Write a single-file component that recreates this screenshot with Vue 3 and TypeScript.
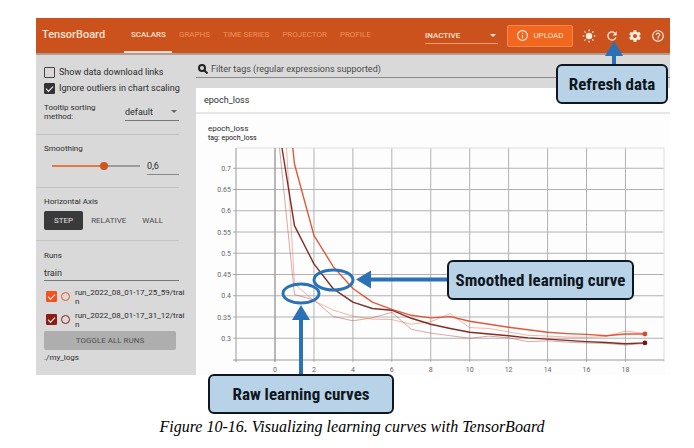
<script setup lang="ts">
import { computed, ref } from 'vue'

interface Run {
  name: string
  color: string
  checked: boolean
}

interface Series {
  color: string
  width: number
  opacity: number
  entry: number
  values: number[]
}

const tabs = ['SCALARS', 'GRAPHS', 'TIME SERIES', 'PROJECTOR', 'PROFILE']
const axes = ['STEP', 'RELATIVE', 'WALL']
const activeTab = ref('SCALARS')
const activeAxis = ref('STEP')
const showLinks = ref(false)
const ignoreOutliers = ref(true)
const smoothing = ref(0.6)
const smoothingText = computed(() => smoothing.value.toString().replace('.', ','))
const runFilter = ref('train')
const tagFilter = ref('')

const runs = ref<Run[]>([
  { name: 'run_2022_08_01-17_25_59/train', color: '#f4511e', checked: true },
  { name: 'run_2022_08_01-17_31_12/train', color: '#8e1c10', checked: true },
])

function toggleAll(): void {
  const next = !runs.value.every((r) => r.checked)
  runs.value.forEach((r) => (r.checked = next))
}

/* Chart geometry, in viewBox units */
const plot = { left: 40, right: 468, top: 6, bottom: 218, zero: 79, step: 19.47 }
const xTicks = Array.from({ length: 10 }, (_, i) => i * 2)
const yTicks = [0.7, 0.65, 0.6, 0.55, 0.5, 0.45, 0.4, 0.35, 0.3]
const px = (epoch: number): number => plot.zero + epoch * plot.step
const py = (loss: number): number => plot.bottom - 0.5 + ((0.25 - loss) / 0.05) * 21.25

/* Each series enters the plot at its top edge (entry), then has one value per epoch from 1 on */
const series: Series[] = [
  {
    color: '#b0544a', width: 0.9, opacity: 0.55, entry: 83.5,
    values: [0.403, 0.39, 0.351, 0.341, 0.348, 0.361, 0.321, 0.312, 0.306, 0.3, 0.305, 0.301, 0.292, 0.294, 0.291, 0.289, 0.288, 0.284, 0.288],
  },
  {
    color: '#f0664a', width: 0.9, opacity: 0.55, entry: 90.5,
    values: [0.428, 0.388, 0.366, 0.352, 0.345, 0.344, 0.333, 0.339, 0.358, 0.325, 0.323, 0.315, 0.307, 0.305, 0.303, 0.302, 0.304, 0.317, 0.311],
  },
  {
    color: '#74160f', width: 1.4, opacity: 0.9, entry: 86,
    values: [0.565, 0.475, 0.416, 0.385, 0.37, 0.366, 0.347, 0.333, 0.323, 0.314, 0.31, 0.306, 0.301, 0.298, 0.295, 0.292, 0.29, 0.287, 0.289],
  },
  {
    color: '#dc4726', width: 1.4, opacity: 0.9, entry: 96.8,
    values: [0.71, 0.542, 0.468, 0.417, 0.385, 0.368, 0.354, 0.348, 0.351, 0.34, 0.333, 0.326, 0.32, 0.314, 0.311, 0.309, 0.306, 0.31, 0.31],
  },
]

function linePoints(s: Series): string {
  return [`${s.entry},${plot.top}`, ...s.values.map((v, i) => `${px(i + 1)},${py(v)}`)].join(' ')
}
const endpoints = series.slice(2).map((s) => ({
  color: s.color,
  x: px(s.values.length),
  y: py(s.values[s.values.length - 1]),
}))
</script>

<template>
  <figure class="figure">
    <div class="shot">
      <header class="bar">
        <h1 class="brand">TensorBoard</h1>
        <nav class="tabs">
          <a
            v-for="t in tabs"
            :key="t"
            href="#"
            class="tab"
            :class="{ active: t === activeTab }"
            @click.prevent="activeTab = t"
          >{{ t }}</a>
        </nav>
        <div class="tools">
          <div class="inactive">
            <select aria-label="Inactive plugins">
              <option>INACTIVE</option>
            </select>
            <svg class="caret" viewBox="0 0 6 3"><path d="M0 0h6L3 3z" /></svg>
          </div>
          <button class="upload" type="button">
            <svg viewBox="0 0 24 24"><path d="M11 7h2v2h-2zm0 4h2v6h-2zm1-9C6.48 2 2 6.480 2 12s4.480 10 10 10 10-4.480 10-10S17.520 2 12 2zm0 18c-4.410 0-8-3.590-8-8s3.590-8 8-8 8 3.590 8 8-3.590 8-8 8z" /></svg>
            UPLOAD
          </button>
          <button class="icon" type="button" aria-label="Theme">
            <svg viewBox="0 0 24 24">
              <circle cx="12" cy="12" r="5.500" />
              <path d="M12 1v3M12 20v3M1 12h3M20 12h3M4.200 4.200l2.100 2.100M17.700 17.700l2.100 2.100M4.200 19.800l2.100-2.100M17.700 6.300l2.100-2.100" fill="none" stroke="currentColor" stroke-width="2" />
            </svg>
          </button>
          <button class="icon" type="button" aria-label="Refresh">
            <svg viewBox="0 0 24 24"><path d="M17.650 6.350A7.958 7.958 0 0 0 12 4c-4.420 0-7.990 3.580-7.990 8s3.570 8 7.990 8c3.730 0 6.840-2.550 7.730-6h-2.080A5.990 5.990 0 0 1 12 18c-3.310 0-6-2.690-6-6s2.690-6 6-6c1.660 0 3.140.69 4.220 1.780L13 11h7V4z" /></svg>
          </button>
          <button class="icon" type="button" aria-label="Settings">
            <svg viewBox="0 0 24 24"><path d="M19.430 12.980c.04-.32.07-.64.07-.98s-.03-.66-.07-.98l2.110-1.650c.19-.15.24-.42.12-.64l-2-3.460c-.12-.22-.39-.3-.61-.22l-2.490 1c-.52-.4-1.080-.73-1.690-.98l-.38-2.650C14.460 2.180 14.250 2 14 2h-4c-.25 0-.46.18-.49.42l-.38 2.650c-.61.25-1.170.59-1.690.98l-2.490-1c-.23-.09-.49 0-.61.22l-2 3.460c-.13.22-.07.49.12.64l2.110 1.650c-.04.32-.07.65-.07.98s.03.66.07.98l-2.110 1.650c-.19.15-.24.42-.12.64l2 3.460c.12.22.39.3.61.22l2.490-1c.52.4 1.080.73 1.690.98l.38 2.650c.03.24.24.42.49.42h4c.25 0 .46-.18.49-.42l.38-2.650c.61-.25 1.170-.59 1.690-.98l2.490 1c.23.09.49 0 .61-.22l2-3.460c.12-.22.07-.49-.12-.64zM12 15.500c-1.930 0-3.500-1.570-3.500-3.500s1.570-3.500 3.500-3.500 3.500 1.570 3.500 3.500-1.570 3.500-3.500 3.500z" /></svg>
          </button>
          <button class="icon" type="button" aria-label="Help">
            <svg viewBox="0 0 24 24"><path d="M11 18h2v-2h-2zm1-16C6.480 2 2 6.480 2 12s4.480 10 10 10 10-4.480 10-10S17.520 2 12 2zm0 18c-4.410 0-8-3.590-8-8s3.590-8 8-8 8 3.590 8 8-3.590 8-8 8zm0-14c-2.210 0-4 1.790-4 4h2c0-1.100.9-2 2-2s2 .9 2 2c0 2-3 1.750-3 5h2c0-2.250 3-2.500 3-5 0-2.210-1.790-4-4-4z" /></svg>
          </button>
        </div>
      </header>

      <div class="body">
        <aside class="side">
          <section class="block options">
            <label class="check"><input v-model="showLinks" type="checkbox" /><span>Show data download links</span></label>
            <label class="check"><input v-model="ignoreOutliers" type="checkbox" /><span>Ignore outliers in chart scaling</span></label>
            <div class="sorting">
              <label for="sorting">Tooltip sorting method:</label>
              <div class="picker">
                <select id="sorting">
                  <option>default</option>
                </select>
                <svg class="caret" viewBox="0 0 6 3"><path d="M0 0h6L3 3z" /></svg>
              </div>
            </div>
          </section>
          <section class="block smooth">
            <label class="title" for="smoothing">Smoothing</label>
            <div class="slide">
              <input id="smoothing" v-model.number="smoothing" type="range" min="0" max="1" step="0.1" />
              <input class="value" type="text" :value="smoothingText" aria-label="Smoothing value" />
            </div>
          </section>
          <section class="block axis">
            <h2 class="title">Horizontal Axis</h2>
            <div class="axes">
              <button
                v-for="a in axes"
                :key="a"
                type="button"
                :class="{ on: a === activeAxis }"
                @click="activeAxis = a"
              >{{ a }}</button>
            </div>
          </section>
          <section class="block runs">
            <label class="title" for="run-filter">Runs</label>
            <input id="run-filter" v-model="runFilter" class="run-filter" type="text" />
            <label v-for="r in runs" :key="r.name" class="run" :style="{ '--run': r.color }">
              <input v-model="r.checked" type="checkbox" />
              <i class="ring"></i>
              <span>{{ r.name }}</span>
            </label>
            <button class="toggle" type="button" @click="toggleAll">TOGGLE ALL RUNS</button>
            <p class="logdir">./my_logs</p>
          </section>
        </aside>

        <main class="main">
          <label class="search">
            <svg viewBox="0 0 10 10"><circle cx="4" cy="4" r="3" /><path d="M6.200 6.200L9.500 9.500" /></svg>
            <input v-model="tagFilter" type="text" aria-label="Filter tags" placeholder="Filter tags (regular expressions supported)" />
          </label>
          <h2 class="group">epoch_loss</h2>
          <section class="card">
            <h3>epoch_loss</h3>
            <p>tag: epoch_loss</p>
            <svg class="chart" viewBox="0 0 474 233" role="img" aria-label="epoch_loss">
              <g class="grid">
                <path v-for="y in yTicks" :key="y" :d="`M${plot.left - 3} ${py(y)}H${plot.right}`" />
                <path v-for="x in xTicks" :key="x" :d="`M${px(x)} ${plot.top}V${plot.bottom + 2}`" />
                <path class="faint" :d="`M${plot.left} ${plot.top}H${plot.right}V${plot.bottom + 2}`" />
                <path class="edge" :d="`M${plot.left} ${plot.top}V${plot.bottom + 2}M${plot.left - 3} ${plot.bottom}H${plot.right}`" />
                <path class="edge" :d="`M${plot.zero} ${plot.top}V${plot.bottom + 2}`" />
              </g>
              <g class="ticks">
                <text v-for="y in yTicks" :key="y" x="35" :y="py(y) + 2.500" text-anchor="end">{{ y }}</text>
                <text v-for="x in xTicks" :key="x" :x="px(x)" y="230" text-anchor="middle">{{ x }}</text>
              </g>
              <polyline
                v-for="(s, i) in series"
                :key="i"
                :points="linePoints(s)"
                fill="none"
                stroke-linejoin="round"
                :stroke="s.color"
                :stroke-width="s.width"
                :opacity="s.opacity"
              />
              <circle v-for="e in endpoints" :key="e.color" :cx="e.x" :cy="e.y" r="2.400" :fill="e.color" />
            </svg>
          </section>
        </main>
      </div>

      <svg class="marks" viewBox="0 0 634 397">
        <g fill="none" stroke="#2a71b8" stroke-width="3">
          <ellipse cx="265" cy="275.500" rx="18" ry="9.500" />
          <ellipse cx="297.500" cy="262" rx="19.500" ry="10" />
          <path d="M265 300v58M334 261.500h79M578 36v12" stroke-width="4" />
        </g>
        <path fill="#2a71b8" d="M265 287l9 15h-18zM320 261.500l15-9v18zM578 23l9 15h-18z" />
      </svg>
      <div class="callout refresh">Refresh data</div>
      <div class="callout smoothed">Smoothed learning curve</div>
      <div class="callout raw">Raw learning curves</div>
    </div>
    <figcaption>Figure 10-16. Visualizing learning curves with TensorBoard</figcaption>
  </figure>
</template>

<style>
body {
  background: #fff;
}
</style>

<style scoped>
*,
*::after {
  box-sizing: border-box;
}
h1, h2, h3, p {
  margin: 0;
  font-weight: 400;
}
button, input, select {
  margin: 0;
  padding: 0;
  border: 0;
  border-radius: 0;
  background: none;
  color: inherit;
  font: inherit;
  outline: none;
  appearance: none;
}
svg {
  display: block;
}
.figure {
  margin: 0;
  padding: 18px 24px 0 36px;
}
.shot {
  position: relative;
  padding-bottom: 40px;
  font-family: Roboto, sans-serif;
  font-size: 9px;
  color: #2c2c2c;
}
.bar {
  display: flex;
  align-items: stretch;
  height: 35px;
  padding: 0 5px 0 6px;
  background: #cb521d;
  color: #fbe3d3;
}
.brand {
  width: 82px;
  font-size: 11px;
  font-weight: 500;
  line-height: 33px;
}
.tabs {
  display: flex;
}
.tab {
  padding: 0 6px 0 7px;
  font-size: 8px;
  line-height: 33px;
  color: #ee9160;
  text-decoration: none;
  border-bottom: 2px solid transparent;
}
.tab.active {
  color: #fbe3d3;
  font-weight: 500;
  border-color: #f6d9c6;
}
.tools {
  display: flex;
  align-items: center;
  margin-left: auto;
}
.inactive {
  position: relative;
  width: 73px;
  margin-right: 9px;
  border-bottom: 1px solid #ee9c72;
}
.inactive select {
  width: 100%;
  height: 16px;
  font-size: 8px;
  font-weight: 500;
}
.caret {
  position: absolute;
  right: 2px;
  top: 7px;
  width: 6px;
  height: 3px;
  fill: currentColor;
}
.upload {
  display: flex;
  align-items: center;
  justify-content: center;
  gap: 4px;
  width: 66px;
  height: 22px;
  border: 1px solid #f58a4c;
  border-radius: 2px;
  background: #f2671f;
  font-size: 8px;
}
.upload svg {
  width: 13px;
  height: 13px;
  fill: currentColor;
}
.icon {
  margin-left: 9px;
  color: #fdeee2;
}
.icon svg {
  width: 14px;
  height: 14px;
  fill: currentColor;
}
.body {
  display: grid;
  grid-template-columns: 160px 1fr;
  border-top: 2px solid #a9a093;
  background: #d9d9d9;
}
.side {
  padding: 9px 17px 0 0;
}
.block {
  padding: 0 0 0 8px;
  border-bottom: 1px solid #c2c2c2;
}
.block:last-child {
  border-bottom: 0;
}
.title {
  display: block;
  font-size: 8px;
  line-height: 12px;
}
.check {
  display: flex;
  align-items: center;
  gap: 4px;
  height: 16px;
  white-space: nowrap;
}
input[type='checkbox'] {
  flex: none;
  width: 11px;
  height: 11px;
  border: 1px solid #444;
  border-radius: 1px;
}
input[type='checkbox']:checked {
  border-color: #333;
  background: #333;
}
input[type='checkbox']:checked::after {
  content: '';
  display: block;
  width: 7px;
  height: 4px;
  margin: 2px 0 0 1px;
  border: solid #fff;
  border-width: 0 0 1px 1px;
  transform: rotate(-45deg);
}
.options {
  height: 71px;
}
.sorting {
  display: flex;
  justify-content: space-between;
  padding-top: 7px;
}
.sorting label {
  width: 64px;
  font-size: 8px;
  line-height: 9px;
}
.picker {
  position: relative;
  width: 54px;
  border-bottom: 1px solid #777;
}
.picker select {
  width: 100%;
  height: 17px;
  font-size: 9px;
}
.picker .caret {
  fill: #666;
}
.smooth {
  height: 53px;
  padding-top: 8px;
}
.slide {
  display: flex;
  align-items: center;
  justify-content: space-between;
  margin-top: 2px;
  padding-left: 8px;
}
.slide input[type='range'] {
  width: 88px;
  height: 18px;
}
.slide input[type='range']::-webkit-slider-runnable-track {
  height: 2px;
  background: linear-gradient(to right, #e07a42 60%, #9b9b9b 60%);
}
.slide input[type='range']::-webkit-slider-thumb {
  appearance: none;
  width: 8px;
  height: 8px;
  margin-top: -3px;
  border-radius: 50%;
  background: #d2551c;
}
.value {
  width: 32px;
  height: 18px;
  border-bottom: 1px solid #888;
}
.axis {
  height: 53px;
  padding-top: 8px;
}
.axes {
  display: flex;
  margin-top: 3px;
}
.axes button {
  height: 19px;
  padding: 0 8px;
  border-radius: 2px;
  font-size: 8px;
  color: #4c4c4c;
}
.axes .on {
  padding: 0 10px;
  background: #3a3a3a;
  color: #e4e4e4;
}
.runs {
  padding-top: 9px;
}
.run-filter {
  display: block;
  width: 100%;
  height: 19px;
  padding-top: 4px;
  border-bottom: 1px solid #777;
}
.run {
  display: flex;
  align-items: center;
  height: 23px;
  margin-right: -6px;
  padding-left: 2px;
}
.run-filter + .run {
  margin-top: 4px;
}
.run input[type='checkbox']:checked {
  border-color: var(--run);
  background: var(--run);
}
.ring {
  flex: none;
  width: 9px;
  height: 9px;
  margin: 0 5px 0 4px;
  border: 1px solid var(--run);
  border-radius: 50%;
}
.run span {
  font-size: 8px;
  line-height: 9px;
  word-break: break-all;
}
.toggle {
  display: block;
  width: 132px;
  height: 19px;
  border-radius: 2px;
  background: #aeaeae;
  font-size: 8px;
  color: #505050;
}
.logdir {
  font-size: 8px;
  line-height: 16px;
}
.main {
  min-width: 0;
}
.search {
  display: flex;
  align-items: center;
  gap: 3px;
  height: 23px;
  margin-bottom: 10px;
  padding: 6px 0 0 2px;
  border-bottom: 1px solid #8a8a8a;
}
.search svg {
  width: 10px;
  height: 10px;
  fill: none;
  stroke: #222;
  stroke-width: 2;
}
.search input {
  flex: 1;
}
.search input::placeholder {
  color: #4a4a4a;
  opacity: 1;
}
.group {
  height: 26px;
  padding-left: 8px;
  border-bottom: 2px solid #e6e6e6;
  background: #fff;
  font-size: 9px;
  line-height: 24px;
}
.card {
  padding-top: 10px;
  background: #fdfdfd;
}
.card h3 {
  padding-left: 12px;
  font-size: 8px;
  line-height: 10px;
}
.card p {
  padding-left: 12px;
  font-size: 7px;
  line-height: 8px;
  color: #111;
}
.chart {
  width: 100%;
}
.grid path {
  fill: none;
  stroke: #b2b2b2;
  stroke-width: 1;
}
.grid .faint {
  stroke: #dedede;
}
.grid .edge {
  stroke: #999;
}
.ticks text {
  font-size: 7px;
  fill: #666;
}
.marks {
  position: absolute;
  top: 0;
  left: 0;
  width: 634px;
  height: 397px;
  pointer-events: none;
}
.callout {
  position: absolute;
  display: flex;
  align-items: center;
  justify-content: center;
  height: 40px;
  border: 2px solid #0f1822;
  border-radius: 6px;
  background: #b8d3e8;
  color: #10161d;
  font-family: 'Roboto Condensed', 'Open Sans Condensed', 'Noto Sans CJK SC', sans-serif;
  font-size: 17px;
  font-weight: 700;
  line-height: 20px;
  white-space: nowrap;
}
.refresh {
  top: 46px;
  left: 520px;
  width: 112px;
}
.smoothed {
  top: 242px;
  left: 411px;
  width: 187px;
}
.raw {
  top: 356px;
  left: 172px;
  width: 186px;
}
figcaption {
  padding-right: 2px;
  font-family: 'Liberation Serif', serif;
  font-size: 16px;
  font-style: italic;
  line-height: 24px;
  text-align: center;
  color: #000;
}
</style>
